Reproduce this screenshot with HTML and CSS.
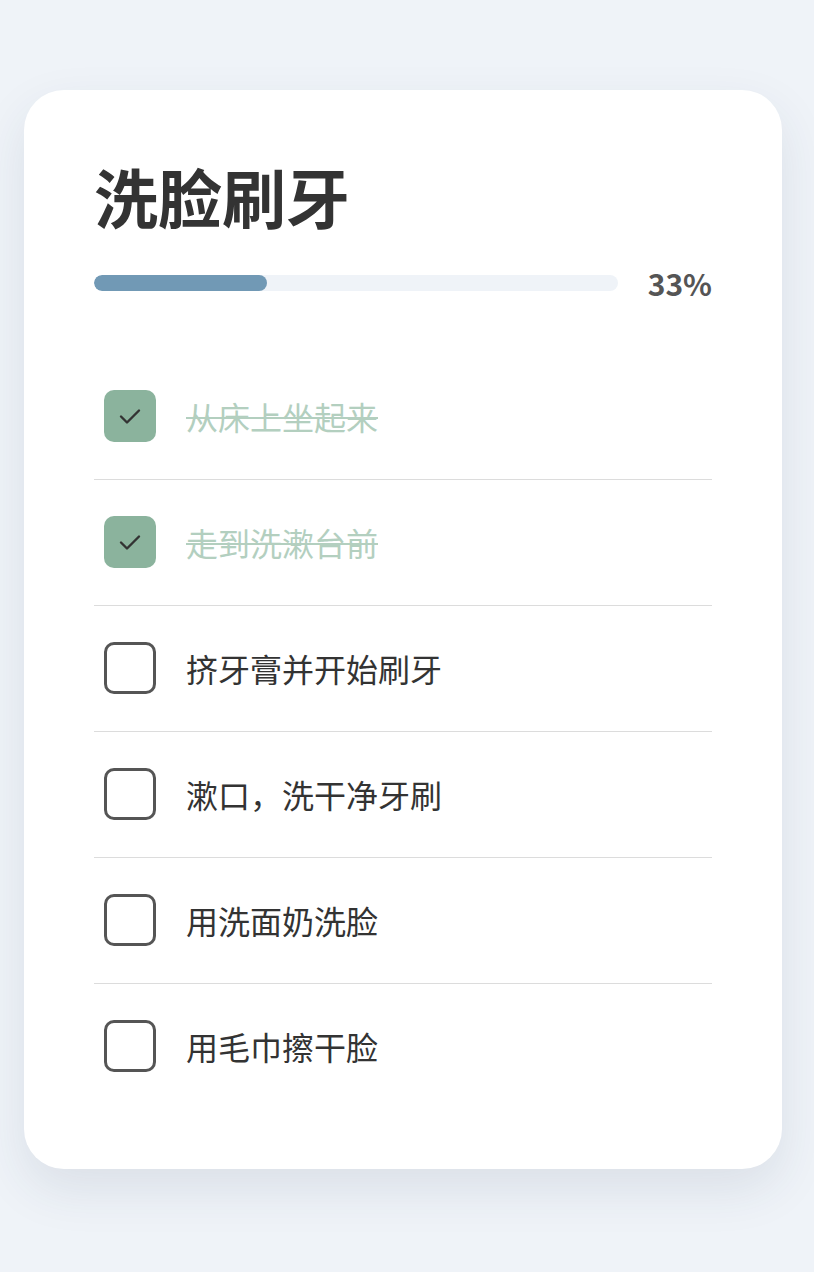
FILE: index.html
```html
<!DOCTYPE html>
<html lang="zh-CN">
<head>
    <meta charset="UTF-8">
    <meta name="viewport" content="width=device-width, initial-scale=1.0">
    <title>洗脸刷牙</title>
    <link rel="stylesheet" href="styles.css">
</head>
<body>
    <div class="card">
        <h1 class="title">洗脸刷牙</h1>

        <div class="progress">
            <div class="track"><div class="fill" style="width: 33%"></div></div>
            <span class="percent">33%</span>
        </div>

        <ul class="tasks">
            <li class="task done">
                <span class="box">
                    <svg width="24" height="24" viewBox="0 0 24 24"><path d="M3 12.5l6 6L21 6.5" fill="none" stroke="#333" stroke-width="2.4" stroke-linecap="round" stroke-linejoin="round"/></svg>
                </span>
                <span class="label">从床上坐起来</span>
            </li>
            <li class="task done">
                <span class="box">
                    <svg width="24" height="24" viewBox="0 0 24 24"><path d="M3 12.5l6 6L21 6.5" fill="none" stroke="#333" stroke-width="2.4" stroke-linecap="round" stroke-linejoin="round"/></svg>
                </span>
                <span class="label">走到洗漱台前</span>
            </li>
            <li class="task">
                <span class="box"></span>
                <span class="label">挤牙膏并开始刷牙</span>
            </li>
            <li class="task">
                <span class="box"></span>
                <span class="label">漱口，洗干净牙刷</span>
            </li>
            <li class="task">
                <span class="box"></span>
                <span class="label">用洗面奶洗脸</span>
            </li>
            <li class="task">
                <span class="box"></span>
                <span class="label">用毛巾擦干脸</span>
            </li>
        </ul>
    </div>
</body>
</html>
```

FILE: styles.css
```css
/* Общие стили */
body {
    margin: 0;
    padding: 90px 32px 104px 24px;
    background-color: #eff3f8;
    font-family: "Noto Sans CJK SC", "Noto Sans", sans-serif;
    color: #333;
}

/* Карточка */
.card {
    width: 758px;
    box-sizing: border-box;
    padding: 67px 70px 60px;
    background-color: #fff;
    border-radius: 40px;
    box-shadow: 0 20px 50px rgba(40, 60, 90, 0.1);
}

.title {
    margin: 0;
    font-size: 64px;
    font-weight: 700;
    line-height: 1.2;
    color: #333;
}

/* Прогресс */
.progress {
    display: flex;
    align-items: center;
    gap: 30px;
    margin-top: 34px;
}

.track {
    flex: 1;
    height: 16px;
    background-color: #eff3f8;
    border-radius: 8px;
    overflow: hidden;
}

.fill {
    height: 100%;
    background-color: #7199b5;
    border-radius: 8px;
}

.percent {
    font-size: 30px;
    font-weight: 700;
    color: #555;
    line-height: 1;
}

/* Список */
.tasks {
    list-style: none;
    margin: 56px 0 0;
    padding: 0;
}

.task {
    display: flex;
    align-items: center;
    gap: 30px;
    padding: 36px 10px 37px;
    border-bottom: 1px solid #dcdcdc;
}

.task:last-child {
    border-bottom: none;
}

.box {
    width: 52px;
    height: 52px;
    box-sizing: border-box;
    border: 3px solid #555;
    border-radius: 10px;
    display: flex;
    align-items: center;
    justify-content: center;
    flex-shrink: 0;
}

.label {
    font-size: 32px;
    line-height: 52px;
    color: #333;
}

.done .box {
    border: none;
    background-color: #8bb39d;
}

.done .label {
    color: #b3cfbf;
    text-decoration: line-through;
    text-decoration-thickness: 2px;
}
```
